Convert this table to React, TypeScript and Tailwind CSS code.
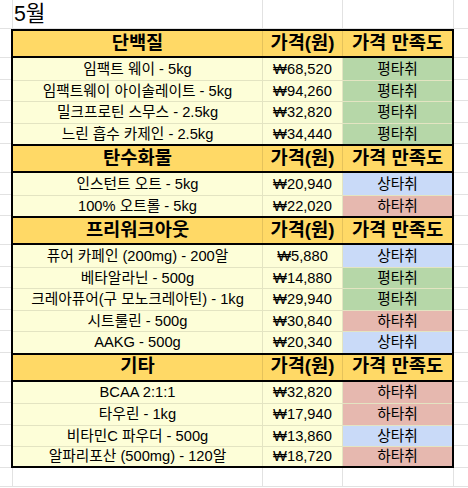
type Rating = "평타취" | "상타취" | "하타취"

type Item = { name: string; price: string; rating: Rating }

type Section = { title: string; items: Item[] }

const sections: Section[] = [
  {
    title: "단백질",
    items: [
      { name: "임팩트 웨이 - 5kg", price: "₩68,520", rating: "평타취" },
      { name: "임팩트웨이 아이솔레이트 - 5kg", price: "₩94,260", rating: "평타취" },
      { name: "밀크프로틴 스무스 - 2.5kg", price: "₩32,820", rating: "평타취" },
      { name: "느린 흡수 카제인 - 2.5kg", price: "₩34,440", rating: "평타취" },
    ],
  },
  {
    title: "탄수화물",
    items: [
      { name: "인스턴트 오트 - 5kg", price: "₩20,940", rating: "상타취" },
      { name: "100% 오트롤 - 5kg", price: "₩22,020", rating: "하타취" },
    ],
  },
  {
    title: "프리워크아웃",
    items: [
      { name: "퓨어 카페인 (200mg) - 200알", price: "₩5,880", rating: "상타취" },
      { name: "베타알라닌 - 500g", price: "₩14,880", rating: "평타취" },
      { name: "크레아퓨어(구 모노크레아틴) - 1kg", price: "₩29,940", rating: "평타취" },
      { name: "시트룰린 - 500g", price: "₩30,840", rating: "하타취" },
      { name: "AAKG - 500g", price: "₩20,340", rating: "상타취" },
    ],
  },
  {
    title: "기타",
    items: [
      { name: "BCAA 2:1:1", price: "₩32,820", rating: "하타취" },
      { name: "타우린 - 1kg", price: "₩17,940", rating: "하타취" },
      { name: "비타민C 파우더 - 500g", price: "₩13,860", rating: "상타취" },
      { name: "알파리포산 (500mg) - 120알", price: "₩18,720", rating: "하타취" },
    ],
  },
]

const ratingBg: Record<Rating, string> = {
  평타취: "bg-[#b6d7a8]",
  상타취: "bg-[#c9daf8]",
  하타취: "bg-[#e6b8af]",
}

// empty sheet cells either side of the table
function Gutter({ left }: { left?: boolean }) {
  return <div className={`${left ? "w-[11px]" : "flex-1"} shrink-0 border-b border-[#e2e2e2]`} />
}

function HeaderRow({ title }: { title: string }) {
  return (
    <div className="flex h-[29px]">
      <Gutter left />
      <div className="flex w-[443px] border-2 border-black bg-[#ffd966] text-[18.7px] font-bold leading-[22px] text-black">
        <div className="flex w-[250px] items-center justify-center border-r border-black/10 pb-[2px]">{title}</div>
        <div className="flex w-[80px] items-center justify-center border-r border-black/10 pb-[2px]">가격(원)</div>
        <div className="flex flex-1 items-center justify-center pb-[2px]">가격 만족도</div>
      </div>
      <Gutter />
    </div>
  )
}

function DataRow({ item, first, last }: { item: Item; first: boolean; last: boolean }) {
  return (
    <div className="flex h-[21.5px]">
      <Gutter left />
      <div className={`flex w-[443px] border-x-2 border-black ${last ? "border-b-2" : ""}`}>
        <div
          className={`flex flex-1 bg-[#fdfed8] text-[14.7px] leading-[17px] text-black ${first ? "" : "border-t border-black/10"}`}
        >
          <div className="flex w-[250px] items-center justify-center border-r border-black/10 pt-[1px] whitespace-nowrap">
            {item.name}
          </div>
          <div className="flex w-[80px] items-center justify-center border-r border-black/10 pt-[1px]">{item.price}</div>
          <div className={`flex flex-1 items-center justify-center pt-[1px] ${ratingBg[item.rating]}`}>{item.rating}</div>
        </div>
      </div>
      <Gutter />
    </div>
  )
}

function SheetRow({ height, children }: { height: string; children?: React.ReactNode }) {
  return (
    <div className={`flex ${height} border-b border-[#e2e2e2]`}>
      <div className="w-[13px] border-r border-[#e2e2e2]" />
      <div className="flex w-[250px] items-end border-r border-[#e2e2e2] pb-[1px]">{children}</div>
      <div className="w-[80px] border-r border-[#e2e2e2]" />
      <div className="w-[111px] border-r border-[#e2e2e2]" />
      <div className="flex-1" />
    </div>
  )
}

export default function App() {
  return (
    <div className="h-[488px] w-[468px] overflow-hidden bg-white font-['Liberation_Sans','Noto_Sans_CJK_KR',sans-serif]">
      <SheetRow height="h-[29px]">
        <span className="pl-[1px] text-[21.3px] leading-[25px] text-black">5월</span>
      </SheetRow>

      {sections.map((s) => (
        <div key={s.title}>
          <HeaderRow title={s.title} />
          {s.items.map((item, i) => (
            <DataRow
              key={item.name}
              item={item}
              first={i === 0}
              last={s === sections[sections.length - 1] && i === s.items.length - 1}
            />
          ))}
        </div>
      ))}

      <SheetRow height="h-[19px]" />
    </div>
  )
}
